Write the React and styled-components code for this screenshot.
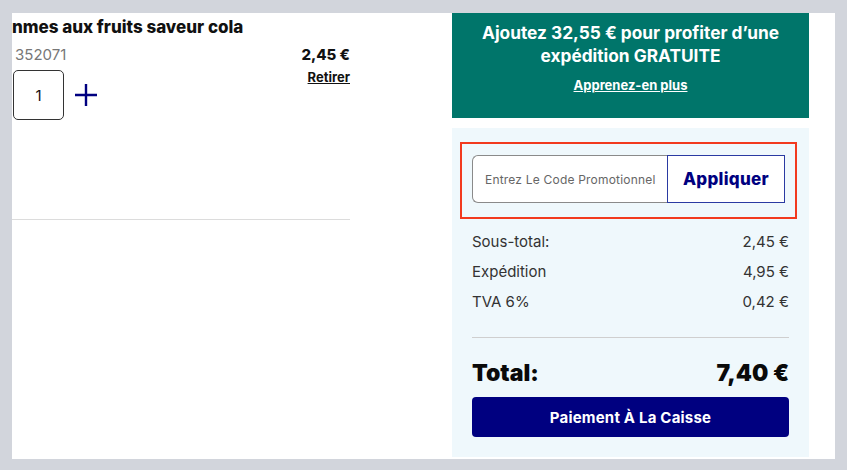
import React from "react";
import styled, { createGlobalStyle } from "styled-components";

const Global = createGlobalStyle`
  html, body { margin: 0; padding: 0; background: #d2d5dc; }
  body { font-family: Inter, "Liberation Sans", sans-serif; color: #111; }
  * { box-sizing: border-box; }
`;

const Frame = styled.div`
  width: 847px;
  height: 470px;
  padding: 13px 12px 11px 12px;
`;

const Card = styled.div`
  background: #fff;
  width: 823px;
  height: 446px;
  overflow: hidden;
  display: flex;
  padding-right: 26px;
`;

const Left = styled.div`
  width: 338px;
  display: flex;
  flex-direction: column;
`;

const Title = styled.h2`
  margin: 2px 0 0 0;
  font-size: 17px;
  line-height: 24px;
  font-weight: 800;
  white-space: nowrap;
  color: #111;
`;

const Details = styled.div`
  display: flex;
  justify-content: space-between;
  margin-top: 6px;
  height: 175px;
  border-bottom: 1px solid #dcdcdc;
`;

const Col = styled.div`
  display: flex;
  flex-direction: column;
  align-items: ${(p) => (p.$end ? "flex-end" : "flex-start")};
`;

const Sku = styled.div`
  font-size: 15px;
  line-height: 20px;
  color: #777;
  padding-left: 3px;
`;

const QtyRow = styled.div`
  display: flex;
  align-items: center;
  gap: 10px;
  margin-top: 5px;
  padding-left: 1px;
`;

const QtyBox = styled.div`
  width: 51px;
  height: 50px;
  border: 1px solid #333;
  border-radius: 5px;
  display: flex;
  align-items: center;
  justify-content: center;
  font-size: 15px;
  color: #111;
`;

const Price = styled.div`
  font-size: 15px;
  line-height: 20px;
  font-weight: 800;
`;

const LinkText = styled.a`
  font-size: ${(p) => p.$size || 13}px;
  line-height: 18px;
  font-weight: 700;
  text-decoration: underline;
  color: ${(p) => p.$color || "#111"};
  margin-top: ${(p) => p.$mt || 0}px;
`;

const Right = styled.div`
  margin-left: auto;
  width: 357px;
  display: flex;
  flex-direction: column;
  gap: 10px;
`;

const Promo = styled.div`
  background: #00756a;
  height: 105px;
  color: #fff;
  text-align: center;
  padding-top: 8px;
  display: flex;
  flex-direction: column;
  align-items: center;
`;

const PromoText = styled.div`
  font-size: 17.3px;
  line-height: 23px;
  font-weight: 700;
`;

const Panel = styled.div`
  background: #eff8fc;
  height: 329px;
  padding: 14px 20px 20px;
  display: flex;
  flex-direction: column;
`;

const Highlight = styled.div`
  margin: 0 -8px 0 -12px;
  border: 2px solid #f23a1f;
  padding: 11px 10px 14px;
  display: flex;
`;

const CodeInput = styled.input`
  width: 195px;
  height: 48px;
  border: 1px solid #8a8a8a;
  border-right: none;
  border-radius: 6px 0 0 6px;
  padding: 0 0 0 12px;
  font-family: inherit;
  font-size: 12px;
  letter-spacing: 0.2px;
  background: #fff;
  outline: none;
  &::placeholder { color: #666; }
`;

const ApplyBtn = styled.button`
  width: 118px;
  height: 48px;
  border: 1px solid #2a3aa2;
  background: #fff;
  color: #000080;
  font-family: inherit;
  font-size: 17px;
  font-weight: 800;
  letter-spacing: 0.3px;
`;

const Rows = styled.div`
  margin-top: 8px;
  padding-bottom: 20px;
  border-bottom: 1px solid #cfcfcf;
`;

const Row = styled.div`
  display: flex;
  justify-content: space-between;
  font-size: 15px;
  line-height: 30px;
  color: #333;
`;

const TotalRow = styled.div`
  display: flex;
  justify-content: space-between;
  font-size: 23px;
  line-height: 30px;
  font-weight: 900;
  margin-top: 20px;
  color: #0a0a0a;
`;

const Checkout = styled.button`
  margin-top: 9px;
  height: 40px;
  border: none;
  border-radius: 4px;
  background: #000080;
  color: #fff;
  font-family: inherit;
  font-size: 15px;
  font-weight: 700;
  letter-spacing: 0.2px;
`;

const Plus = () => (
  <svg width="24" height="24" viewBox="0 0 24 24" fill="none">
    <path d="M12 1v22M1 12h22" stroke="#000080" strokeWidth="2.4" />
  </svg>
);

export default function App() {
  return (
    <Frame>
      <Global />
      <Card>
        <Left>
          <Title>nmes aux fruits saveur cola</Title>
          <Details>
            <Col>
              <Sku>352071</Sku>
              <QtyRow>
                <QtyBox>1</QtyBox>
                <Plus />
              </QtyRow>
            </Col>
            <Col $end>
              <Price>2,45 €</Price>
              <LinkText $mt={3}>Retirer</LinkText>
            </Col>
          </Details>
        </Left>
        <Right>
          <Promo>
            <PromoText>Ajoutez 32,55 € pour profiter d’une</PromoText>
            <PromoText>expédition GRATUITE</PromoText>
            <LinkText $color="#fff" $mt={9}>Apprenez-en plus</LinkText>
          </Promo>
          <Panel>
            <Highlight>
              <CodeInput placeholder="Entrez Le Code Promotionnel" />
              <ApplyBtn>Appliquer</ApplyBtn>
            </Highlight>
            <Rows>
              <Row><span>Sous-total:</span><span>2,45 €</span></Row>
              <Row><span>Expédition</span><span>4,95 €</span></Row>
              <Row><span>TVA 6%</span><span>0,42 €</span></Row>
            </Rows>
            <TotalRow><span>Total:</span><span>7,40 €</span></TotalRow>
            <Checkout>Paiement À La Caisse</Checkout>
          </Panel>
        </Right>
      </Card>
    </Frame>
  );
}
